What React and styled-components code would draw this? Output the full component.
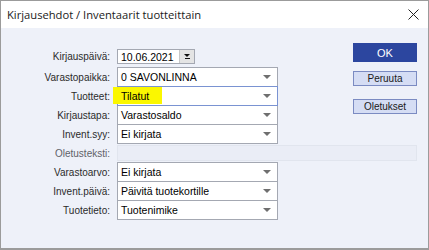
import React from 'react';
import styled, { createGlobalStyle } from 'styled-components';

const GlobalStyle = createGlobalStyle`
    html, body {
        margin: 0;
        padding: 0;
        background: #ffffff;
    }
`;

const Dialog = styled.div`
    width: 429px;
    height: 250px;
    box-sizing: border-box;
    border: 1px solid #9b9b9b;
    border-bottom-width: 2px;
    display: flex;
    flex-direction: column;
    font-family: 'Liberation Sans', Arial, sans-serif;
    color: #000;
`;

const TitleBar = styled.div`
    height: 27px;
    flex: none;
    background: #ffffff;
    display: flex;
    align-items: center;
    justify-content: space-between;
    padding: 0 9px 0 6px;
    font-family: 'Open Sans', 'Liberation Sans', sans-serif;
    font-size: 11.2px;
    color: #1a1a1a;
`;

const CloseIcon = styled.svg`
    width: 11px;
    height: 11px;
`;

const Body = styled.div`
    flex: 1;
    background: #eef1f9;
    padding-top: 15px;
    font-size: 10.5px;
`;

const TopSection = styled.div`
    display: flex;
    justify-content: space-between;
    padding-right: 11px;
`;

const Form = styled.div`
    display: flex;
    flex-direction: column;
    margin-top: 6px;
`;

const Row = styled.div`
    display: grid;
    grid-template-columns: 109px ${p => p.$fieldWidth || 161}px;
    column-gap: 7px;
    align-items: center;
    margin-top: ${p => p.$overlap ? -1 : p.$top || 0}px;
    margin-bottom: ${p => p.$after || 0}px;
`;

const Label = styled.div`
    text-align: right;
    font-size: 10px;
    color: ${p => p.$muted ? '#5f6268' : '#2b2b2b'};
    white-space: nowrap;
`;

const Select = styled.div`
    position: relative;
    height: 20px;
    box-sizing: border-box;
    border: 1px solid ${p => p.$focused ? '#7a93d2' : '#a4a8b2'};
    background: #ffffff;
    display: flex;
    align-items: center;
    padding-left: 3px;
    z-index: ${p => p.$focused ? 1 : 0};
`;

const Arrow = styled.span`
    margin-left: auto;
    margin-right: 6px;
    width: 0;
    height: 0;
    border-left: 4px solid transparent;
    border-right: 4px solid transparent;
    border-top: 4px solid #6f6f6f;
`;

const Highlight = styled.span`
    position: absolute;
    left: -5px;
    top: 0;
    width: 49px;
    height: 17px;
    background: #fbf700;
    z-index: -1;
`;

const ValueText = styled.span`
    position: relative;
`;

const DateField = styled.div`
    width: 78px;
    height: 15px;
    box-sizing: border-box;
    border: 1px solid #a4a8b2;
    background: #ffffff;
    display: flex;
    align-items: center;
    padding-left: 3px;
`;

const DateButton = styled.div`
    margin-left: auto;
    width: 15px;
    height: 13px;
    box-sizing: border-box;
    background: #e4e4e4;
    border-left: 1px solid #c8c8c8;
    display: flex;
    flex-direction: column;
    align-items: center;
    justify-content: center;
    gap: 1px;
`;

const DateTri = styled.span`
    width: 0;
    height: 0;
    border-left: 3px solid transparent;
    border-right: 3px solid transparent;
    border-top: 3px solid #111;
`;

const DateLine = styled.span`
    width: 5px;
    height: 1px;
    background: #111;
`;

const TextBox = styled.div`
    height: 16px;
    box-sizing: border-box;
    border: 1px solid #e1e5ee;
    background: #eaedf6;
`;

const Buttons = styled.div`
    display: flex;
    flex-direction: column;
    width: 64px;
`;

const Button = styled.div`
    height: ${p => p.$primary ? 19 : 15}px;
    margin-top: ${p => p.$top || 0}px;
    box-sizing: border-box;
    display: flex;
    align-items: center;
    justify-content: center;
    font-size: ${p => p.$primary ? 11 : 10}px;
    background: ${p => p.$primary ? '#2c469f' : '#d5ddf4'};
    color: ${p => p.$primary ? '#ffffff' : '#1a1a1a'};
    border: 1px solid ${p => p.$primary ? '#2c469f' : '#7b8bc2'};
`;

const FIELDS_TOP = [
    { label: 'Varastopaikka:', value: '0 SAVONLINNA' },
    { label: 'Tuotteet:', value: 'Tilatut', focused: true },
    { label: 'Kirjaustapa:', value: 'Varastosaldo' },
    { label: 'Invent.syy:', value: 'Ei kirjata' },
];

const FIELDS_BOTTOM = [
    { label: 'Varastoarvo:', value: 'Ei kirjata' },
    { label: 'Invent.päivä:', value: 'Päivitä tuotekortille' },
    { label: 'Tuotetieto:', value: 'Tuotenimike' },
];

const SelectRow = ({ field, first }) => (
    <Row $overlap={!first}>
        <Label>{field.label}</Label>
        <Select $focused={field.focused}>
            {field.focused && <Highlight />}
            <ValueText>{field.value}</ValueText>
            <Arrow />
        </Select>
    </Row>
);

const App = () => {
    return (
        <>
            <GlobalStyle />
            <Dialog>
                <TitleBar>
                    <span>Kirjausehdot / Inventaarit tuotteittain</span>
                    <CloseIcon viewBox="0 0 11 11">
                        <path d="M0.5 0.5 L10.5 10.5 M10.5 0.5 L0.5 10.5" stroke="#222" strokeWidth="1" fill="none" />
                    </CloseIcon>
                </TitleBar>
                <Body>
                    <TopSection>
                        <Form>
                            <Row $after={3}>
                                <Label>Kirjauspäivä:</Label>
                                <DateField>
                                    10.06.2021
                                    <DateButton>
                                        <DateTri />
                                        <DateLine />
                                    </DateButton>
                                </DateField>
                            </Row>
                            {FIELDS_TOP.map((f, i) => (
                                <SelectRow key={f.label} field={f} first={i === 0} />
                            ))}
                        </Form>
                        <Buttons>
                            <Button $primary>OK</Button>
                            <Button $top={9}>Peruuta</Button>
                            <Button $top={13}>Oletukset</Button>
                        </Buttons>
                    </TopSection>
                    <Row $fieldWidth={300} $top={1} $after={1}>
                        <Label $muted>Oletusteksti:</Label>
                        <TextBox />
                    </Row>
                    {FIELDS_BOTTOM.map((f, i) => (
                        <SelectRow key={f.label} field={f} first={i === 0} />
                    ))}
                </Body>
            </Dialog>
        </>
    );
};

export default App;
